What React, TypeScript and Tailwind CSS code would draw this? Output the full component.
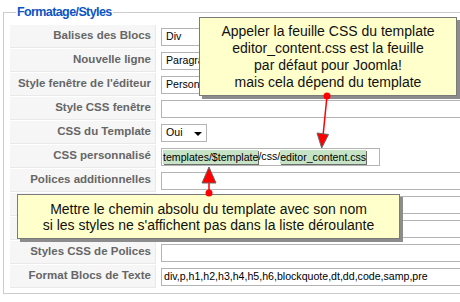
import React from "react";

type Row = { label: string; kind: "select" | "input" | "oui" | "css" | "text"; value?: string };

const rows: Row[] = [
  { label: "Balises des Blocs", kind: "select", value: "Div" },
  { label: "Nouvelle ligne", kind: "select", value: "Paragraphes" },
  { label: "Style fenêtre de l'éditeur", kind: "select", value: "Personnalisé" },
  { label: "Style CSS fenêtre", kind: "input" },
  { label: "CSS du Template", kind: "oui" },
  { label: "CSS personnalisé", kind: "css" },
  { label: "Polices additionnelles", kind: "input" },
  { label: "", kind: "input" },
  { label: "", kind: "input" },
  { label: "Styles CSS de Polices", kind: "input" },
  { label: "Format Blocs de Texte", kind: "text", value: "div,p,h1,h2,h3,h4,h5,h6,blockquote,dt,dd,code,samp,pre" },
];

function Value({ row }: { row: Row }) {
  const base = "h-[18px] border border-[#b4b4b4] bg-white flex items-center text-[10.6px] text-black leading-none";
  if (row.kind === "select") {
    return <div className={`${base} w-[130px] pl-[4px]`}>{row.value}</div>;
  }
  if (row.kind === "oui") {
    return (
      <div className={`${base} w-[46px] pl-[4px] justify-between pr-[4px]`}>
        <span>Oui</span>
        <span className="w-0 h-0 border-l-[4px] border-r-[4px] border-t-[4px] border-l-transparent border-r-transparent border-t-black mt-[2px]" />
      </div>
    );
  }
  if (row.kind === "css") {
    return (
      <div className={`${base} w-[219px] pl-[1px] whitespace-nowrap text-[10.3px]`}>
        <span className="bg-[#c6e3c6] shadow-[1px_1px_0_#6d6d6d] leading-[14px]">templates/$template</span>
        <span>/css/</span>
        <span className="bg-[#c6e3c6] shadow-[1px_1px_0_#6d6d6d] leading-[14px]">editor_content.css</span>
      </div>
    );
  }
  if (row.kind === "text") {
    return <div className={`${base} w-[400px] pl-[2px] whitespace-nowrap`}>{row.value}</div>;
  }
  return <div className={`${base} w-[400px]`} />;
}

export default function App() {
  return (
    <div className="relative w-[460px] h-[302px] bg-white overflow-hidden" style={{ fontFamily: '"Liberation Sans", Arial, sans-serif' }}>
      <fieldset className="ml-[3px] mt-[5px] w-[480px] border border-[#cccccc] pl-[6px] pt-[6px] pb-[4px]">
        <legend className="ml-[6px] px-[1px] text-[12.5px] font-bold text-[#0b55c4] leading-[14px] tracking-[-0.6px]">Formatage/Styles</legend>
        <div className="flex flex-col">
          {rows.map((r, i) => (
            <div key={i} className="flex h-[24px]">
              <div className="w-[146px] h-[23px] bg-[#f6f6f6] border-b border-r border-[#e9e9e9] flex items-center justify-end pr-[4px] text-[11.5px] font-bold text-[#666666] whitespace-nowrap">
                {r.label}
              </div>
              <div className="flex items-center pl-[5px] h-[23px]">
                <Value row={r} />
              </div>
            </div>
          ))}
        </div>
      </fieldset>

      <div className="absolute left-[199px] top-[17px] w-[258px] h-[79px] bg-[#ffffcc] border border-[#7a7a7a] shadow-[3px_3px_0_#8c8c8c] flex flex-col items-center justify-center text-[14px] leading-[17px] text-[#111]">
        <span>Appeler la feuille CSS du template</span>
        <span>editor_content.css est la feuille</span>
        <span>par défaut pour Joomla!</span>
        <span>mais cela dépend du template</span>
      </div>

      <div className="absolute left-[17px] top-[194px] w-[383px] h-[45px] bg-[#ffffcc] border border-[#7a7a7a] shadow-[3px_3px_0_#8c8c8c] flex flex-col items-center justify-center text-[14px] leading-[16px] text-[#111]">
        <span>Mettre le chemin absolu du template avec son nom</span>
        <span>si les styles ne s'affichent pas dans la liste déroulante</span>
      </div>

      <svg className="absolute left-0 top-0 pointer-events-none" width="460" height="302" viewBox="0 0 460 302">
        <line x1="327" y1="96" x2="323" y2="136" stroke="#ff0000" strokeWidth="1.5" />
        <polygon points="317,133 328.5,134.5 321.7,148" fill="#ff0000" stroke="#666" strokeWidth="1" />
        <circle cx="327" cy="96" r="3.5" fill="#ff0000" />
        <line x1="209" y1="193" x2="209" y2="182" stroke="#ff0000" strokeWidth="1.5" />
        <polygon points="202,183 216,183 209,167" fill="#ff0000" stroke="#666" strokeWidth="1" />
        <circle cx="209" cy="193" r="3.5" fill="#ff0000" />
      </svg>
    </div>
  );
}
